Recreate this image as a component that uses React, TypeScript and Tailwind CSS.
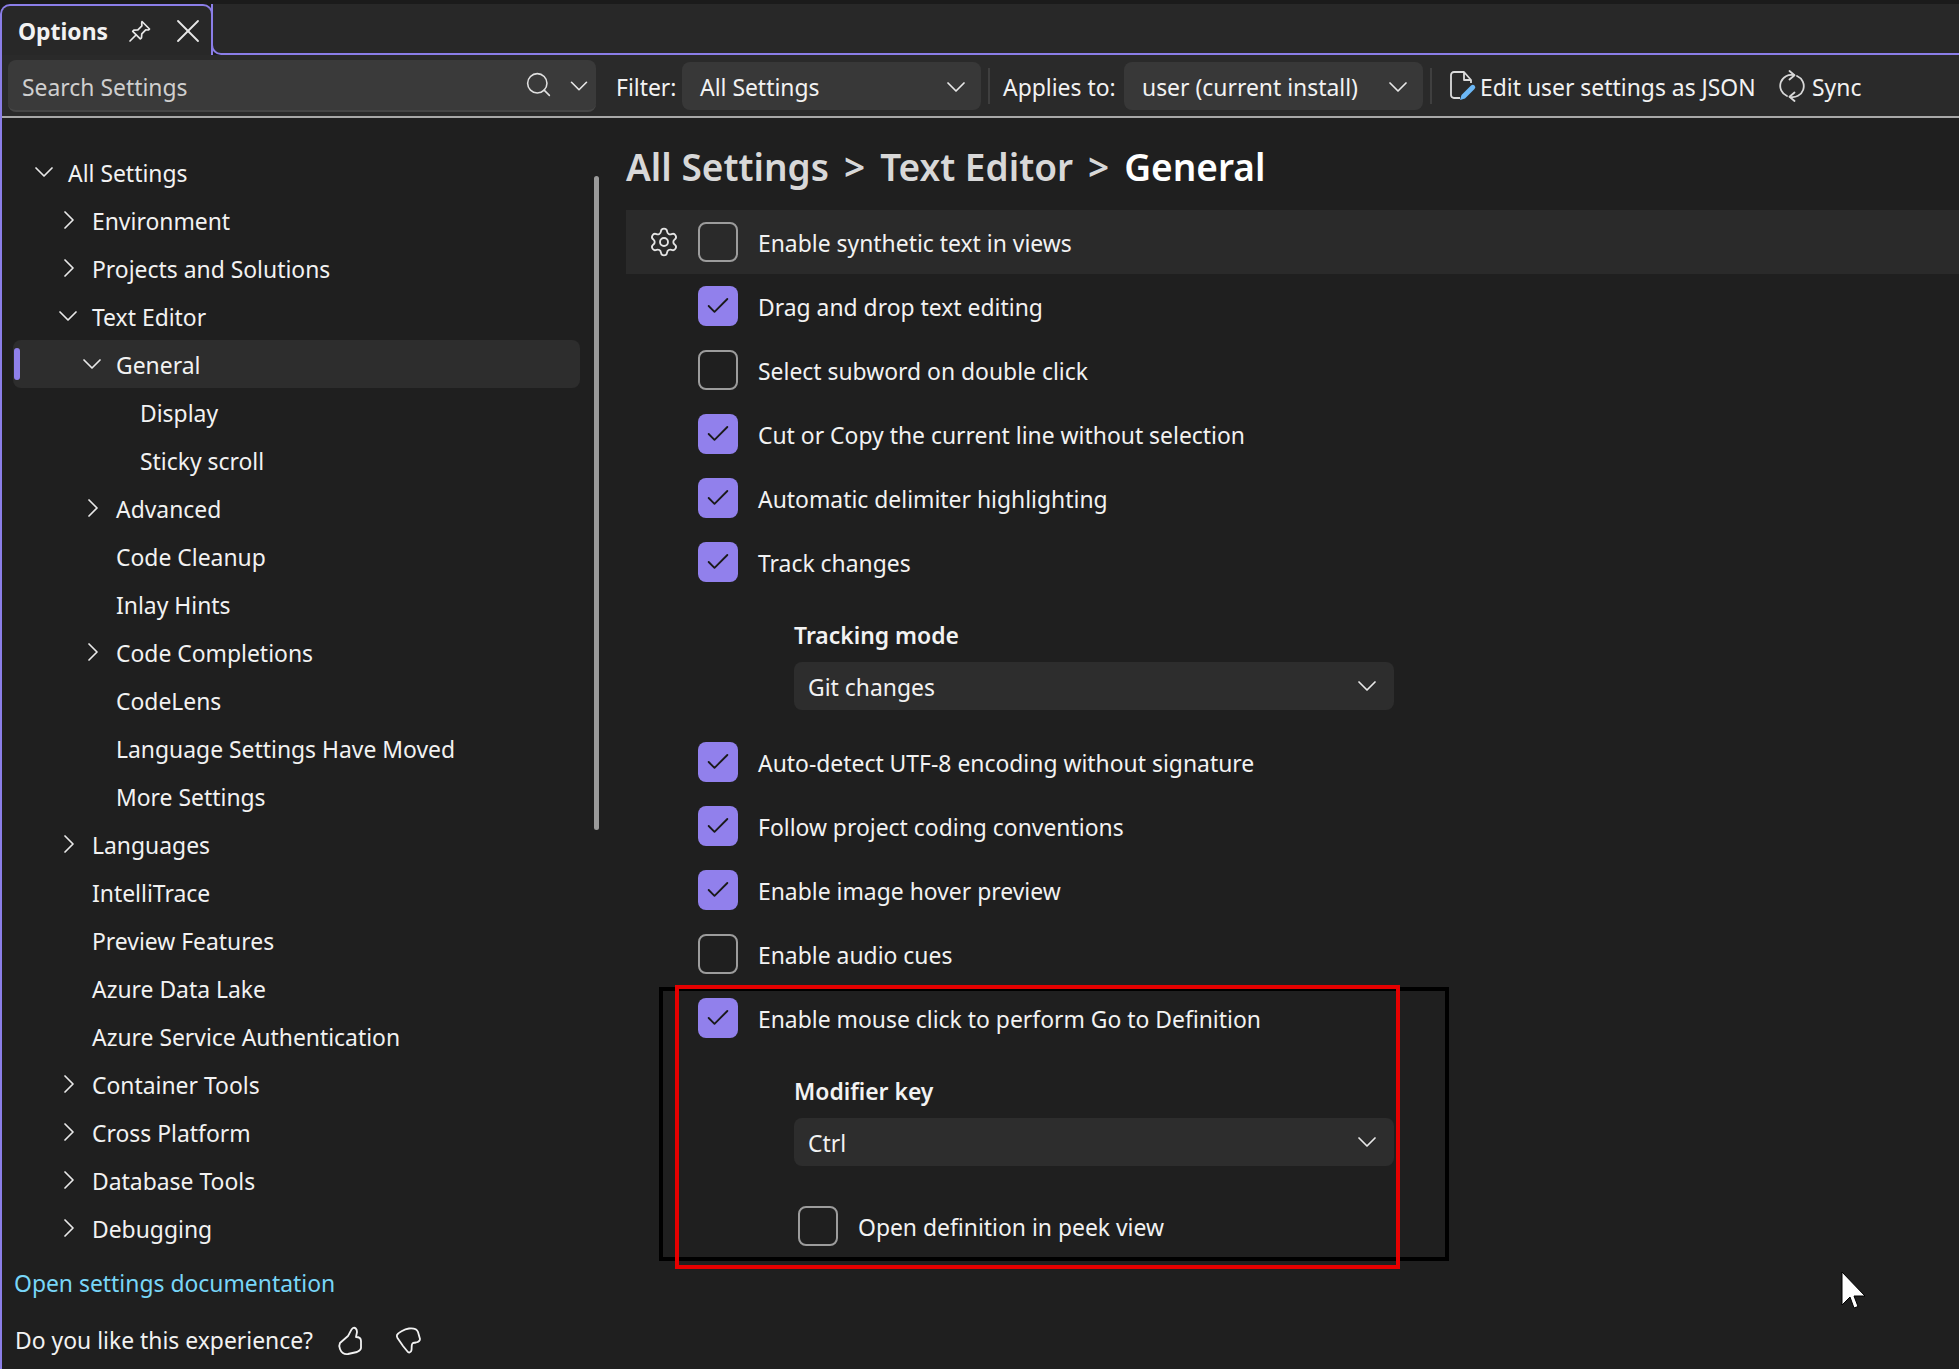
import React from 'react';
import { Check, ChevronDown, ChevronRight, Search, Settings, X } from 'lucide-react';

type TreeItem = { label: string; level: 0 | 1 | 2 | 3; arrow?: 'open' | 'closed'; selected?: boolean };

const TREE: TreeItem[] = [
  { label: 'All Settings', level: 0, arrow: 'open' },
  { label: 'Environment', level: 1, arrow: 'closed' },
  { label: 'Projects and Solutions', level: 1, arrow: 'closed' },
  { label: 'Text Editor', level: 1, arrow: 'open' },
  { label: 'General', level: 2, arrow: 'open', selected: true },
  { label: 'Display', level: 3 },
  { label: 'Sticky scroll', level: 3 },
  { label: 'Advanced', level: 2, arrow: 'closed' },
  { label: 'Code Cleanup', level: 2 },
  { label: 'Inlay Hints', level: 2 },
  { label: 'Code Completions', level: 2, arrow: 'closed' },
  { label: 'CodeLens', level: 2 },
  { label: 'Language Settings Have Moved', level: 2 },
  { label: 'More Settings', level: 2 },
  { label: 'Languages', level: 1, arrow: 'closed' },
  { label: 'IntelliTrace', level: 1 },
  { label: 'Preview Features', level: 1 },
  { label: 'Azure Data Lake', level: 1 },
  { label: 'Azure Service Authentication', level: 1 },
  { label: 'Container Tools', level: 1, arrow: 'closed' },
  { label: 'Cross Platform', level: 1, arrow: 'closed' },
  { label: 'Database Tools', level: 1, arrow: 'closed' },
  { label: 'Debugging', level: 1, arrow: 'closed' },
];

const INDENT = ['pl-[21px]', 'pl-[45px]', 'pl-[69px]', 'pl-[93px]'];

function Arrow({ open }: { open: boolean }) {
  return open ? (
    <ChevronDown size={32} strokeWidth={1.3} className="text-[#e8e8e8] shrink-0 -mx-[6px]" />
  ) : (
    <ChevronRight size={32} strokeWidth={1.3} className="text-[#e8e8e8] shrink-0 -ml-[5px] -mr-[7px]" />
  );
}

function TreeRow({ item }: { item: TreeItem }) {
  return (
    <div className={`relative h-[48px] flex items-center rounded-[8px] ${INDENT[item.level]} ${item.selected ? 'bg-[#2d2d2d]' : ''}`}>
      {item.selected && <div className="absolute left-[1px] top-[8px] h-[32px] w-[6px] rounded-full bg-[#8f80ea]" />}
      <div className="w-[20px] mr-[14px] flex justify-center">{item.arrow && <Arrow open={item.arrow === 'open'} />}</div>
      <span className="pt-[4px]">{item.label}</span>
    </div>
  );
}

function Box({ on }: { on?: boolean }) {
  return on ? (
    <div className="w-[40px] h-[40px] rounded-[8px] bg-[#9180ec] flex items-center justify-center shrink-0">
      <Check size={28} strokeWidth={1.6} className="text-[#1a1a1a]" />
    </div>
  ) : (
    <div className="w-[40px] h-[40px] rounded-[8px] border-2 border-[#9c9c9c] shrink-0" />
  );
}

function OptionRow({ label, on, hover }: { label: string; on?: boolean; hover?: boolean }) {
  return (
    <div className={`h-[64px] flex items-center ${hover ? 'bg-[#2a2a2a]' : ''}`}>
      <div className="w-[72px] pl-[3px] flex justify-center">
        {hover && <Settings size={32} strokeWidth={1.4} className="text-[#e4e4e4]" />}
      </div>
      <Box on={on} />
      <span className="ml-[20px] pt-[4px]">{label}</span>
    </div>
  );
}

function SubSelect({ label, value }: { label: string; value: string }) {
  return (
    <div className="pl-[168px] pt-[16px]">
      <div className="h-[48px] flex items-center font-semibold pt-[4px]">{label}</div>
      <div className="mt-[4px] w-[600px] h-[48px] rounded-[8px] bg-[#2d2d2d] flex items-center justify-between pl-[14px] pr-[11px]">
        <span className="pt-[4px]">{value}</span>
        <ChevronDown size={32} strokeWidth={1.3} className="text-[#e8e8e8]" />
      </div>
    </div>
  );
}

function ToolbarSelect({ value }: { value: string }) {
  return (
    <div className="w-[299px] h-[48px] rounded-[8px] bg-[#383838] flex items-center justify-between pl-[18px] pr-[9px]">
      <span className="pt-[5px]">{value}</span>
      <ChevronDown size={32} strokeWidth={1.3} className="text-[#e8e8e8] mt-[2px]" />
    </div>
  );
}

export default function App() {
  return (
    <div className="w-[1959px] h-[1369px] overflow-hidden relative flex flex-col bg-[#1f1f1f] text-[#f2f2f2] font-['Noto_Sans',sans-serif] text-[22.9px]">
      {/* Tab strip */}
      <div className="h-[55px] pt-[4px] flex bg-[#1b1b1b] shrink-0">
        <div className="w-[213px] rounded-t-[10px] border-t-2 border-l-2 border-r-2 border-[#8b7ee8] bg-[#282828] flex items-center pl-[16px]">
          <span className="font-bold w-[110px] pt-[3px]">Options</span>
          <svg width="24" height="24" viewBox="0 0 24 24" fill="none" stroke="#e8e8e8" strokeWidth="1.7" strokeLinejoin="round" strokeLinecap="round">
            <path d="M14 2.500 21.500 10l-1.200 1-2.600-.2-3.900 4-.3 4-1.200 1.100-7.600-7.600 1.200-1.200 4-.3 4-3.900-.2-2.700Z" />
            <path d="M8 16 2 22" />
          </svg>
          <X size={40} strokeWidth={1.1} className="text-[#e8e8e8] ml-[16px] shrink-0" />
        </div>
        <div className="flex-1 bg-[#282828] border-b-2 border-l-2 border-[#8b7ee8] rounded-bl-[10px] -ml-[2px]" />
      </div>

      <div className="flex-1 min-h-0 flex flex-col border-l-2 border-[#8b7ee8]">
        {/* Toolbar */}
        <div className="h-[63px] shrink-0 flex items-center bg-[#2a2a2a] border-b-2 border-[#a8a8a8] pl-[6px]">
          <div className="w-[588px] h-[52px] rounded-[8px] bg-[#3a3a3a] border-b-2 border-[#464646] flex items-center pl-[14px] pr-[2px]">
            <span className="text-[#cfcfcf] flex-1 pt-[7px]">Search Settings</span>
            <Search size={29} strokeWidth={1.3} className="text-[#e0e0e0]" />
            <ChevronDown size={30} strokeWidth={1.3} className="text-[#e8e8e8] ml-[11px] mt-[2px]" />
          </div>
          <span className="ml-[20px] w-[66px] pt-[6px]">Filter:</span>
          <ToolbarSelect value="All Settings" />
          <div className="w-[2px] h-[36px] bg-[#3f3f3f] mx-[7px]" />
          <span className="ml-[6px] w-[121px] pt-[6px]">Applies to:</span>
          <ToolbarSelect value="user (current install)" />
          <div className="w-[2px] h-[36px] bg-[#3f3f3f] mx-[7px]" />
          <svg width="28" height="32" viewBox="0 0 28 32" fill="none" className="ml-[10px] shrink-0">
            <path d="M11 28H5a3 3 0 0 1-3-3V5a3 3 0 0 1 3-3h10l7 8v3M15 2v8h7" stroke="#dcdcdc" strokeWidth="1.8" strokeLinejoin="round" />
            <path d="M11 30l1.500-5L22 15.500a2 2 0 0 1 3.500 3.500L16 28.500Z" fill="#6cb8f6" />
          </svg>
          <span className="ml-[3px] w-[299px] pt-[6px]">Edit user settings as JSON</span>
          <svg width="26" height="32" viewBox="0 0 26 32" fill="none" stroke="#d8d8d8" strokeWidth="1.8" strokeLinecap="round" strokeLinejoin="round" className="shrink-0">
            <path d="M15 5.200A11 11 0 0 0 8 26M11 26.800A11 11 0 0 0 18 6" />
            <path d="M10.500 1l5 4.200-5 4.300M15.500 22.500l-5 4.300 5 4.200" />
          </svg>
          <span className="ml-[7px] pt-[6px]">Sync</span>
        </div>

        {/* Body */}
        <div className="flex-1 min-h-0 flex">
          <div className="w-[624px] shrink-0 flex flex-col">
            <div className="flex pt-[30px]">
              <div className="ml-[11px] w-[567px]">
                {TREE.map((item) => (
                  <TreeRow key={item.label} item={item} />
                ))}
              </div>
              <div className="ml-[14px] mt-[28px] w-[5px] h-[654px] rounded-full bg-[#9a9a9a]" />
            </div>
            <div className="mt-[8px] h-[48px] flex items-center pl-[12px] text-[#78d6f8]">Open settings documentation</div>
            <div className="mt-[9px] h-[48px] flex items-center pl-[13px]">
              <span>Do you like this experience?</span>
              <svg width="28" height="30" viewBox="0 0 28 30" fill="none" stroke="#f2f2f2" strokeWidth="1.8" strokeLinejoin="round" className="ml-[24px] shrink-0">
                <path d="M3 17 11 10C13 7 14 3 16 2C18 1 20 3 20 6L19 11C22 11 24 12 24 15L24 22C24 24 22 25 20 26L11 28C7 29 4 26 3 23C2 21 2 19 3 17Z" />
              </svg>
              <svg width="28" height="30" viewBox="0 0 28 30" fill="none" stroke="#f2f2f2" strokeWidth="1.8" strokeLinejoin="round" className="ml-[30px] shrink-0">
                <path d="M2 9C3 7 9 3 14 2.500C19 2 22 3 23 6L25 13C25 15 23 16 21 16.500L18 17C16 18 17 21 16.500 24C16 27 13.500 27 12.500 25.500L8 20L2.500 12C2 11 1.500 10 2 9Z" />
              </svg>
            </div>
          </div>

          <div className="flex-1 min-w-0">
            <div className="h-[92px] pt-[25px] flex gap-[15px] text-[37px] leading-[48px] font-semibold text-[#d8d8d8]">
              <span>All Settings</span>
              <span>&gt;</span>
              <span>Text Editor</span>
              <span>&gt;</span>
              <span className="text-white">General</span>
            </div>
            <OptionRow label="Enable synthetic text in views" hover />
            <OptionRow label="Drag and drop text editing" on />
            <OptionRow label="Select subword on double click" />
            <OptionRow label="Cut or Copy the current line without selection" on />
            <OptionRow label="Automatic delimiter highlighting" on />
            <OptionRow label="Track changes" on />
            <div className="pb-[20px]">
              <SubSelect label="Tracking mode" value="Git changes" />
            </div>
            <OptionRow label="Auto-detect UTF-8 encoding without signature" on />
            <OptionRow label="Follow project coding conventions" on />
            <OptionRow label="Enable image hover preview" on />
            <OptionRow label="Enable audio cues" />
            <OptionRow label="Enable mouse click to perform Go to Definition" on />
            <div className="pb-[28px]">
              <SubSelect label="Modifier key" value="Ctrl" />
            </div>
            <div className="h-[64px] flex items-center pl-[172px]">
              <Box />
              <span className="ml-[20px] pt-[4px]">Open definition in peek view</span>
            </div>
          </div>
        </div>
      </div>

      {/* Screenshot annotations */}
      <div className="absolute left-[659px] top-[987px] w-[790px] h-[274px] border-[4px] border-black" />
      <div className="absolute left-[675px] top-[985px] w-[725px] h-[284px] border-[4px] border-[#e60000]" />
      <svg width="26" height="38" viewBox="0 0 26 38" className="absolute left-[1841px] top-[1272px]">
        <path d="M1 0V33L9 25L13 36L17 34.500L13 24H24Z" fill="#fff" stroke="#000" strokeWidth="1" />
      </svg>
    </div>
  );
}
